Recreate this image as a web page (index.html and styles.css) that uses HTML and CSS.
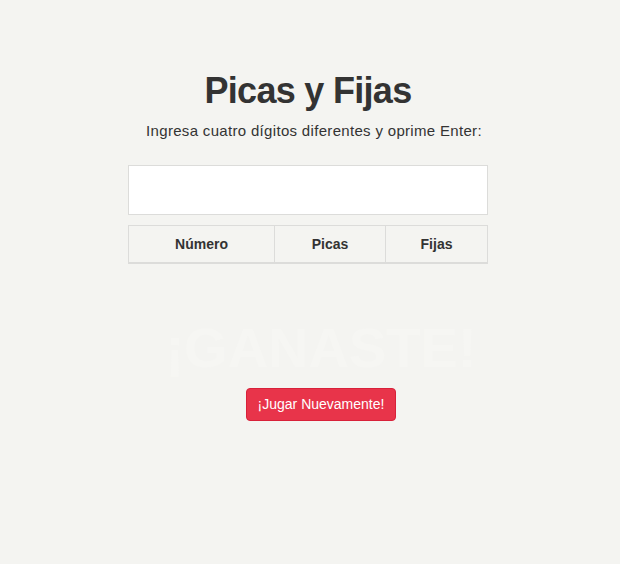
FILE: index.html
```html
<!DOCTYPE html>
<html lang="es">
<head>
<meta charset="utf-8">
<title>Picas y Fijas</title>
<link rel="stylesheet" href="styles.css">
</head>
<body>
<main class="game">
  <h1 class="title">Picas y Fijas</h1>
  <p class="intro">Ingresa cuatro dígitos diferentes y oprime Enter:</p>
  <input class="guess" type="text" aria-label="Número">
  <table class="results">
    <colgroup>
      <col class="col-num">
      <col class="col-picas">
      <col class="col-fijas">
    </colgroup>
    <thead>
      <tr>
        <th>Número</th>
        <th>Picas</th>
        <th>Fijas</th>
      </tr>
    </thead>
    <tbody></tbody>
  </table>
</main>
<section class="win">
  <div class="win-text">¡GANASTE!</div>
  <button class="btn-again" type="button">¡Jugar Nuevamente!</button>
</section>
</body>
</html>
```

FILE: styles.css
```css
html, body {
  margin: 0;
  padding: 0;
}
body {
  background: #f4f4f1;
  color: #333;
  font-family: "Liberation Sans", Arial, sans-serif;
  font-size: 14px;
}
.game {
  width: 360px;
  margin: 0 0 0 128px;
  padding-top: 71px;
  display: flex;
  flex-direction: column;
  align-items: stretch;
}
.title {
  margin: 0;
  font-size: 36px;
  line-height: 40px;
  font-weight: bold;
  letter-spacing: -0.7px;
  text-align: center;
  color: #333;
}
.intro {
  margin: 10px 0 0;
  font-size: 15px;
  line-height: 20px;
  letter-spacing: 0.32px;
  text-align: center;
  color: #333;
  padding-left: 12px;
}
.guess {
  margin-top: 24px;
  box-sizing: border-box;
  height: 50px;
  width: 100%;
  border: 1px solid #dcdcda;
  background: #fff;
  outline: none;
  padding: 0 12px;
}
.results {
  margin-top: 10px;
  width: 359px;
  border-collapse: collapse;
  table-layout: fixed;
}
.col-num { width: 146px; }
.col-picas { width: 111px; }
.col-fijas { width: 102px; }
.results th {
  border: 1px solid #dcdcda;
  border-bottom: 2px solid #dcdcda;
  padding: 8px;
  line-height: 20px;
  font-size: 14px;
  font-weight: bold;
  text-align: center;
  color: #333;
}
.win {
  margin-top: 54px;
  padding-left: 22px;
  display: flex;
  flex-direction: column;
  align-items: center;
}
.win-text {
  font-size: 56px;
  line-height: 60px;
  font-weight: bold;
  color: #f6f6f3;
}
.btn-again {
  margin-top: 10px;
  font-family: "Liberation Sans", Arial, sans-serif;
  font-size: 14px;
  line-height: 19px;
  padding: 6px 11px;
  color: #fff;
  background: #e8344a;
  border: 1px solid #d8213a;
  border-radius: 4px;
}
```
